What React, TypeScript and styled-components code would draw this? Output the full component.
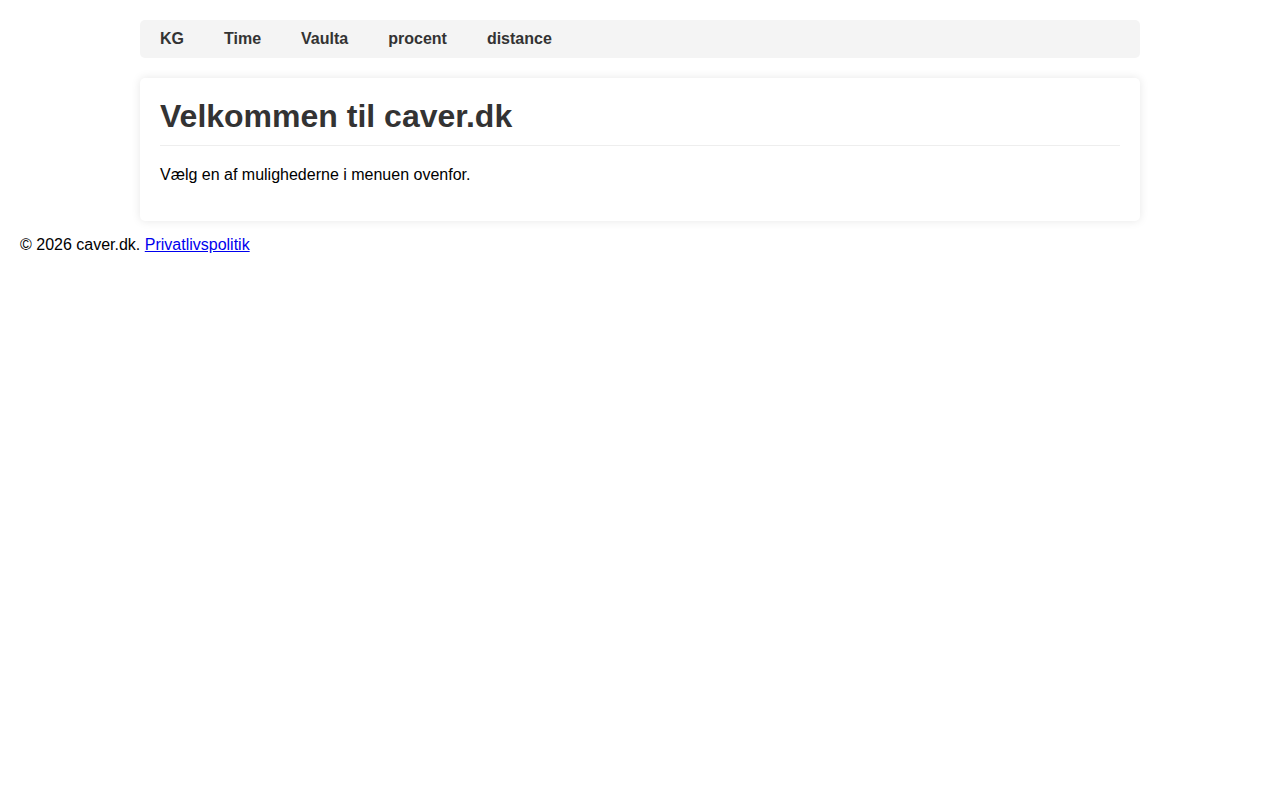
import React from "react";
import styled, { createGlobalStyle } from "styled-components";

const GlobalStyle = createGlobalStyle`
  html, body { margin: 0; padding: 0; background: #fff; }
  body {
    font-family: "Liberation Sans", Arial, sans-serif;
    font-size: 16px;
    color: #000;
    padding: 20px;
  }
`;

const Container = styled.div`
  max-width: 1000px;
  margin: 0 auto;
`;

const Nav = styled.nav`
  display: flex;
  background: #f4f4f4;
  border-radius: 5px;
  height: 38px;
  align-items: center;
`;

const NavLink = styled.a`
  padding: 10px 20px;
  font-weight: bold;
  color: #333;
  text-decoration: none;
  line-height: 18px;
`;

const Card = styled.main`
  margin-top: 20px;
  background: #fff;
  border-radius: 5px;
  box-shadow: 0 0 10px rgba(0, 0, 0, 0.1);
  padding: 20px 20px 21px;
`;

const Title = styled.h1`
  margin: 0 0 20px;
  padding-bottom: 10px;
  border-bottom: 1px solid #eee;
  font-size: 32px;
  line-height: normal;
  color: #333;
`;

const Text = styled.p`
  margin: 0 0 16px;
  line-height: normal;
`;

const Footer = styled.footer`
  margin-top: 15px;
  line-height: normal;
`;

const Link = styled.a`
  color: #0000ee;
  text-decoration: underline;
`;

export default function App() {
  return (
    <>
      <GlobalStyle />
      <Container>
        <Nav>
          {["KG", "Time", "Vaulta", "procent", "distance"].map((l) => (
            <NavLink key={l} href="#">
              {l}
            </NavLink>
          ))}
        </Nav>
        <Card>
          <Title>Velkommen til caver.dk</Title>
          <Text>Vælg en af mulighederne i menuen ovenfor.</Text>
        </Card>
      </Container>
      <Footer>
        © 2026 caver.dk. <Link href="#">Privatlivspolitik</Link>
      </Footer>
    </>
  );
}
